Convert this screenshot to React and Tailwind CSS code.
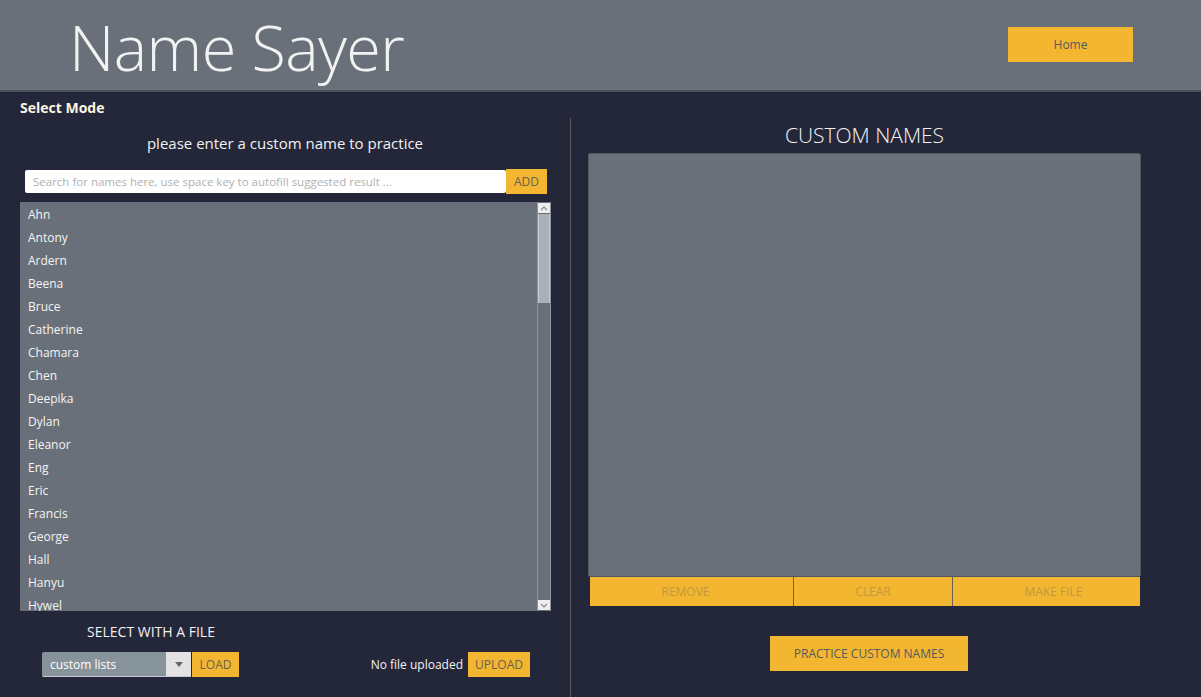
import React from 'react';

const names = [
    'Ahn', 'Antony', 'Ardern', 'Beena', 'Bruce', 'Catherine', 'Chamara', 'Chen', 'Deepika',
    'Dylan', 'Eleanor', 'Eng', 'Eric', 'Francis', 'George', 'Hall', 'Hanyu', 'Hywel',
];

const font = { fontFamily: '"Open Sans", "Noto Sans", sans-serif' };

const App = () => {
    return (
        <div className="w-[1201px] h-[697px] bg-[#242739] flex flex-col overflow-hidden text-white" style={font}>
            {/* Header */}
            <header className="h-[92px] shrink-0 bg-[#6a7079] border-b-2 border-[#4d4f56] flex items-start justify-between">
                <h1 className="ml-[69px] mt-[7px] text-[63px] font-light leading-[80px] text-[#f2f2f2] tracking-[-0.6px]">Name Sayer</h1>
                <button className="mr-[68px] mt-[27px] w-[125px] h-[35px] bg-[#f2b630] text-[12px] text-[#555a60]">Home</button>
            </header>

            {/* Mode label */}
            <div className="h-[26px] shrink-0 pl-[20px] pt-[7px] text-[14px] font-bold leading-[18px] text-[#fdf6e3]">Select Mode</div>

            <div className="flex flex-1 min-h-0">
                {/* Left column */}
                <section className="w-[570px] shrink-0 flex flex-col">
                    <p className="mt-[14px] h-[22px] text-center text-[15px] leading-[22px] text-[#f2f2f2]">please enter a custom name to practice</p>

                    <div className="mt-[15px] ml-[25px] flex items-center h-[25px]">
                        <div className="w-[481px] h-[23px] bg-white rounded-[2px] flex items-center pl-[8px] text-[11.5px] text-[#b0b0b0]">
                            Search for names here, use space key to autofill suggested result ...
                        </div>
                        <button className="w-[41px] h-[25px] bg-[#f2b630] text-[12px] text-[#6a6150]">ADD</button>
                    </div>

                    <div className="mt-[8px] ml-[20px] w-[531px] h-[409px] bg-[#6a7079] flex">
                        <ul className="flex-1 overflow-hidden pt-px">
                            {names.map((n) => (
                                <li key={n} className="h-[23px] leading-[23px] pl-[8px] text-[12px] text-[#f4f4f4]">{n}</li>
                            ))}
                        </ul>
                        {/* scrollbar */}
                        <div className="w-[14px] flex flex-col border-x border-[#8c9399] bg-[#6a7079]">
                            <div className="h-[10px] mt-[1px] bg-[#eeeeee] flex items-center justify-center">
                                <svg width="8" height="5" viewBox="0 0 8 5"><path d="M1 4 L4 1 L7 4" fill="none" stroke="#888" strokeWidth="1.2" /></svg>
                            </div>
                            <div className="mt-[1px] h-[89px] bg-[#a9b0b6] border-x border-[#c4c9cd]" />
                            <div className="flex-1" />
                            <div className="h-[10px] mb-[1px] bg-[#eeeeee] flex items-center justify-center">
                                <svg width="8" height="5" viewBox="0 0 8 5"><path d="M1 1 L4 4 L7 1" fill="none" stroke="#888" strokeWidth="1.2" /></svg>
                            </div>
                        </div>
                    </div>

                    <div className="flex mt-[11px]">
                        <div className="w-[260px] pl-[42px] flex flex-col">
                            <p className="h-[20px] text-[14px] leading-[20px] text-[#f2f2f2] text-center">SELECT WITH A FILE</p>
                            <div className="mt-[10px] flex h-[25px]">
                                <div className="w-[149px] h-[25px] bg-[#87939a] flex border-b border-[#c8ccd0] rounded-l-[2px]">
                                    <span className="flex-1 pl-[8px] text-[12px] leading-[25px] text-white">custom lists</span>
                                    <span className="w-[25px] bg-[#e3e3e3] flex items-center justify-center">
                                        <svg width="8" height="5" viewBox="0 0 8 5"><path d="M0 0 L8 0 L4 5 Z" fill="#666" /></svg>
                                    </span>
                                </div>
                                <button className="ml-[1px] w-[47px] h-[25px] bg-[#f2b630] text-[12px] text-[#6a6150]">LOAD</button>
                            </div>
                        </div>
                        <div className="flex-1 flex items-end justify-end pr-[40px]">
                            <span className="text-[12px] text-[#f4f4f4] leading-[25px] mr-[5px]">No file uploaded</span>
                            <button className="w-[62px] h-[25px] bg-[#f2b630] text-[12px] text-[#6a6150]">UPLOAD</button>
                        </div>
                    </div>
                </section>

                {/* Divider */}
                <div className="w-px bg-[#5c5a5c] shrink-0" />

                {/* Right column */}
                <section className="flex-1 pl-[17px] flex flex-col">
                    <h2 className="w-[553px] mt-[5px] h-[24px] text-center text-[21px] font-light leading-[24px] text-[#f2f2f2]">CUSTOM NAMES</h2>
                    <div className="mt-[6px] w-[553px] h-[424px] bg-[#6a7079] border border-[#52575f] rounded-[2px]" />
                    <div className="ml-[2px] w-[550px] h-[29px] flex">
                        <button className="w-[203px] pr-[12px] bg-[#f2b630] text-[12px] text-[#c29a3e]">REMOVE</button>
                        <div className="w-px bg-[#6a6150]" />
                        <button className="w-[158px] bg-[#f2b630] text-[12px] text-[#c29a3e]">CLEAR</button>
                        <div className="w-px bg-[#6a6150]" />
                        <button className="flex-1 pl-[14px] bg-[#f2b630] text-[12px] text-[#c29a3e]">MAKE FILE</button>
                    </div>
                    <button className="mt-[30px] ml-[182px] w-[198px] h-[35px] bg-[#f2b630] text-[12px] text-[#555a60]">PRACTICE CUSTOM NAMES</button>
                </section>
            </div>
        </div>
    );
};

export default App;
